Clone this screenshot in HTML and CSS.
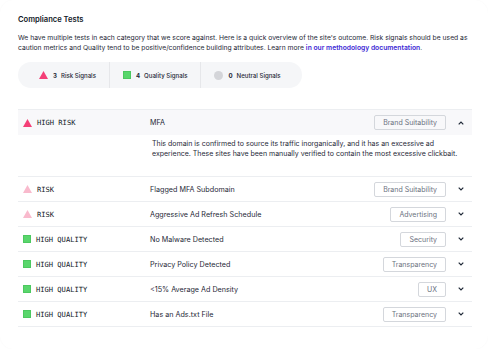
FILE: index.html
```html
<!DOCTYPE html>
<html>
  <head>
    <meta charset="utf-8" />
    <title>Compliance Tests</title>
    <link rel="stylesheet" href="styles.css">
  </head>
  <body>
    <div class="card">
      <h2 class="title">Compliance Tests</h2>
      <p class="intro">We have multiple tests in each category that we score against. Here is a quick overview of the site's outcome. Risk signals should be used as caution metrics and Quality tend to be positive/confidence building attributes. Learn more <a href="#">in our methodology documentation</a>.</p>

      <div class="summary">
        <div class="seg">
          <svg class="ico" width="9" height="8" viewBox="0 0 9 8"><polygon points="4.5,0 9,8 0,8" fill="#f43f77"/></svg>
          <b>3</b><span>Risk Signals</span>
        </div>
        <div class="seg">
          <span class="sq"></span>
          <b>4</b><span>Quality Signals</span>
        </div>
        <div class="seg">
          <span class="dot"></span>
          <b>0</b><span>Neutral Signals</span>
        </div>
      </div>

      <div class="tests">
        <div class="row open">
          <div class="level"><svg class="ico" width="9" height="8" viewBox="0 0 9 8"><polygon points="4.5,0 9,8 0,8" fill="#f43f77"/></svg>HIGH RISK</div>
          <div class="name">MFA</div>
          <span class="tag">Brand Suitability</span>
          <svg class="chev" width="6" height="4" viewBox="0 0 6 4"><polyline points="0.7,3.3 3,1 5.3,3.3" fill="none" stroke="#1f2937" stroke-width="1.2"/></svg>
        </div>
        <div class="detail">This domain is confirmed to source its traffic inorganically, and it has an excessive ad experience. These sites have been manually verified to contain the most excessive clickbait.</div>

        <div class="row">
          <div class="level"><svg class="ico" width="9" height="8" viewBox="0 0 9 8"><polygon points="4.5,0 9,8 0,8" fill="#f9bacd"/></svg>RISK</div>
          <div class="name">Flagged MFA Subdomain</div>
          <span class="tag">Brand Suitability</span>
          <svg class="chev" width="6" height="4" viewBox="0 0 6 4"><polyline points="0.7,0.7 3,3 5.3,0.7" fill="none" stroke="#1f2937" stroke-width="1.2"/></svg>
        </div>
        <div class="row">
          <div class="level"><svg class="ico" width="9" height="8" viewBox="0 0 9 8"><polygon points="4.5,0 9,8 0,8" fill="#f9bacd"/></svg>RISK</div>
          <div class="name">Aggressive Ad Refresh Schedule</div>
          <span class="tag">Advertising</span>
          <svg class="chev" width="6" height="4" viewBox="0 0 6 4"><polyline points="0.7,0.7 3,3 5.3,0.7" fill="none" stroke="#1f2937" stroke-width="1.2"/></svg>
        </div>
        <div class="row">
          <div class="level"><span class="sq"></span>HIGH QUALITY</div>
          <div class="name">No Malware Detected</div>
          <span class="tag">Security</span>
          <svg class="chev" width="6" height="4" viewBox="0 0 6 4"><polyline points="0.7,0.7 3,3 5.3,0.7" fill="none" stroke="#1f2937" stroke-width="1.2"/></svg>
        </div>
        <div class="row">
          <div class="level"><span class="sq"></span>HIGH QUALITY</div>
          <div class="name">Privacy Policy Detected</div>
          <span class="tag">Transparency</span>
          <svg class="chev" width="6" height="4" viewBox="0 0 6 4"><polyline points="0.7,0.7 3,3 5.3,0.7" fill="none" stroke="#1f2937" stroke-width="1.2"/></svg>
        </div>
        <div class="row">
          <div class="level"><span class="sq"></span>HIGH QUALITY</div>
          <div class="name">&lt;15% Average Ad Density</div>
          <span class="tag">UX</span>
          <svg class="chev" width="6" height="4" viewBox="0 0 6 4"><polyline points="0.7,0.7 3,3 5.3,0.7" fill="none" stroke="#1f2937" stroke-width="1.2"/></svg>
        </div>
        <div class="row">
          <div class="level"><span class="sq"></span>HIGH QUALITY</div>
          <div class="name">Has an Ads.txt File</div>
          <span class="tag">Transparency</span>
          <svg class="chev" width="6" height="4" viewBox="0 0 6 4"><polyline points="0.7,0.7 3,3 5.3,0.7" fill="none" stroke="#1f2937" stroke-width="1.2"/></svg>
        </div>
      </div>
    </div>
  </body>
</html>
```

FILE: styles.css
```css
html, body {
  margin: 0;
  background: #ffffff;
}
body {
  font-family: Inter, "Noto Sans", sans-serif;
  color: #111827;
}
.card {
  box-sizing: border-box;
  width: 488px;
  height: 349px;
  padding: 14px 14px 0 18px;
  border-radius: 14px;
  box-shadow: 0 0 2px rgba(0, 0, 0, 0.04);
}
.title {
  margin: 0;
  font-size: 7.6px;
  line-height: 12px;
  font-weight: 600;
}
.intro {
  margin: 7px 0 0;
  font-size: 6.75px;
  line-height: 10px;
  color: #1f2937;
}
.intro a {
  color: #3b1fd4;
  font-weight: 600;
  text-decoration: none;
}
.summary {
  display: inline-flex;
  margin-top: 9px;
  height: 26px;
  padding: 0 8px;
  border-radius: 13px;
  background: #f5f6f8;
}
.seg {
  display: flex;
  align-items: center;
  padding: 0 13px;
  font-size: 6.1px;
  font-weight: 500;
  color: #1f2937;
}
.seg + .seg {
  border-left: 1px solid #e6e7ea;
}
.seg b {
  font-weight: 700;
  margin: 0 4px 0 5px;
}
.dot {
  width: 9px;
  height: 9px;
  border-radius: 50%;
  background: #d4d5d9;
}
.sq {
  display: inline-block;
  box-sizing: border-box;
  width: 8px;
  height: 8px;
  background: #59d66c;
  border: 1px solid #4cc85f;
}
.tests {
  margin-top: 21px;
  width: 454px;
  border-top: 1px solid #eceef1;
}
.row {
  display: flex;
  align-items: center;
  height: 24px;
  padding-left: 5px;
  border-bottom: 1px solid #eceef1;
}
.row.open {
  background: #f8f8fa;
  border-bottom: none;
  height: 25px;
}
.level {
  display: flex;
  align-items: center;
  width: 127px;
  font-family: "DejaVu Sans Mono", "Liberation Mono", monospace;
  font-size: 7.1px;
  color: #111827;
}
.level .ico, .level .sq {
  margin-right: 5px;
}
.name {
  flex: 1;
  font-size: 7.2px;
  color: #1f2937;
}
.tag {
  box-sizing: border-box;
  height: 15px;
  line-height: 13px;
  padding: 0 8px;
  border: 1px solid #d4d7dc;
  border-radius: 2px;
  font-size: 7px;
  color: #6b7280;
}
.chev {
  margin: 0 8px 0 12px;
}
.detail {
  height: 42px;
  box-sizing: border-box;
  padding: 4px 14px 0 134px;
  border-bottom: 1px solid #eceef1;
  font-size: 7px;
  line-height: 10px;
  color: #1f2937;
}
```
